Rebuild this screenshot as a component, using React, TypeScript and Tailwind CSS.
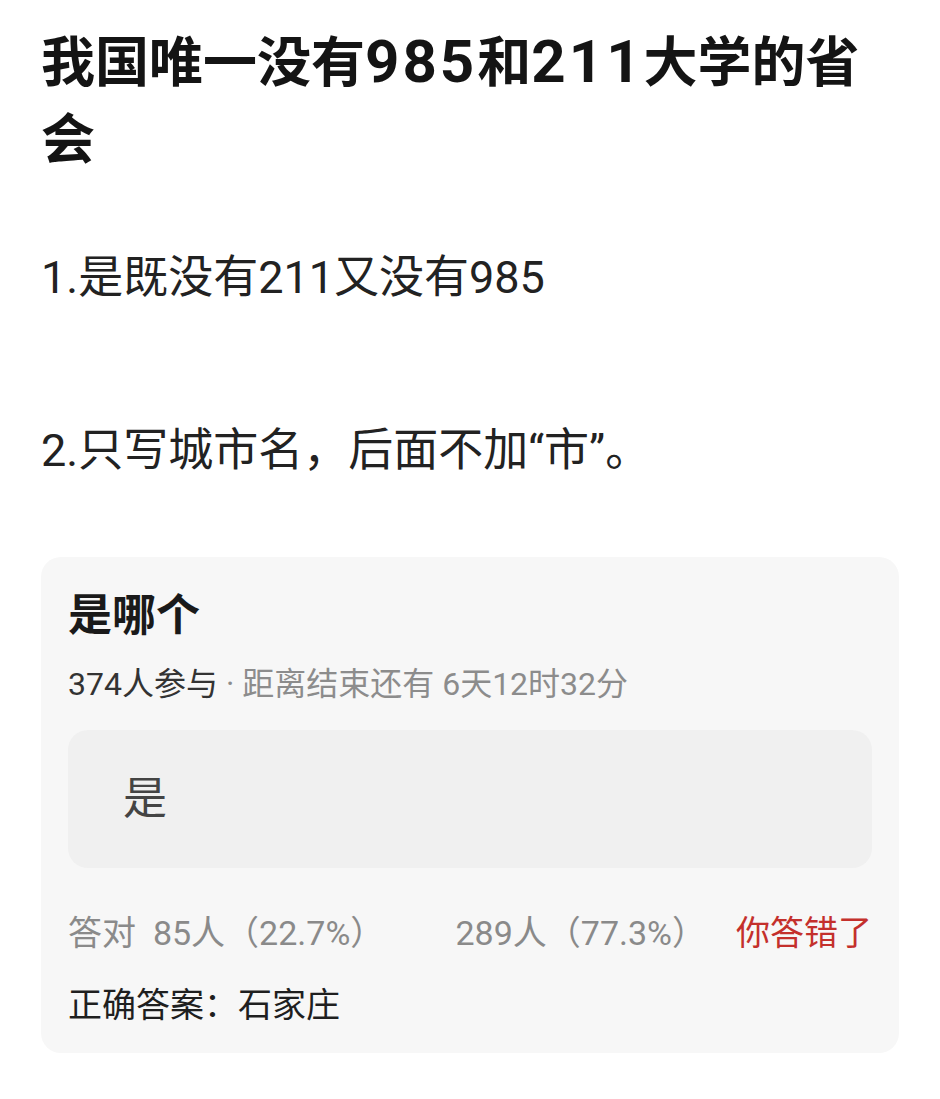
import React from 'react';

const font = { fontFamily: 'Roboto, "Noto Sans CJK SC", sans-serif' };

interface PollStat {
  label?: string;
  count: number;
  percent: string;
}

const correct: PollStat = { label: '答对', count: 85, percent: '22.7%' };
const wrong: PollStat = { count: 289, percent: '77.3%' };

const PollCard: React.FC = () => {
  return (
    <div className="mt-[76px] rounded-[20px] bg-[#f7f7f7] px-[27px] pt-[34px] pb-[28px]">
      <h2 className="text-[44px] font-bold leading-[50px] text-[#1a1a1a]">是哪个</h2>

      <p className="mt-[24px] text-[32px] leading-[38px] text-[#333]">
        374人参与
        <span className="text-[#8c8c8c]"> · 距离结束还有 6天12时32分</span>
      </p>

      {/* single option, already voted */}
      <div className="mt-[27px] flex h-[138px] items-center rounded-[20px] bg-[#f0f0f0] pl-[55px]">
        <span className="text-[44px] text-[#444]">是</span>
      </div>

      <div className="mt-[45px] flex items-center justify-between text-[34px] leading-[40px]">
        <span className="text-[#8a8a8a]">
          {correct.label}&nbsp; {correct.count}人（{correct.percent}）
        </span>
        <div className="flex items-center gap-[30px]">
          <span className="text-[#8a8a8a]">
            {wrong.count}人（{wrong.percent}）
          </span>
          <span className="text-[#c4302c]">你答错了</span>
        </div>
      </div>

      <p className="mt-[32px] text-[34px] leading-[40px] text-[#1f1f1f]">正确答案：石家庄</p>
    </div>
  );
};

export default function App() {
  return (
    <div className="min-h-[1099px] w-[940px] bg-white px-[41px] pt-[25px]" style={font}>
      {/* numbers in the headline are set a bit larger than the CJK glyphs */}
      <h1 className="text-[54px] font-bold leading-[77px] text-[#141414]">
        我国唯一没有<span className="text-[60px] leading-none tracking-[3px]">985</span>和<span className="text-[60px] leading-none tracking-[3px]">211</span>大学的省会
      </h1>

      <p className="mt-[69px] text-[45px] leading-[60px] text-[#222]">1.是既没有211又没有985</p>
      <p className="mt-[113px] text-[45px] leading-[60px] text-[#222]">2.只写城市名，后面不加“市”。</p>

      <PollCard />
    </div>
  );
}
